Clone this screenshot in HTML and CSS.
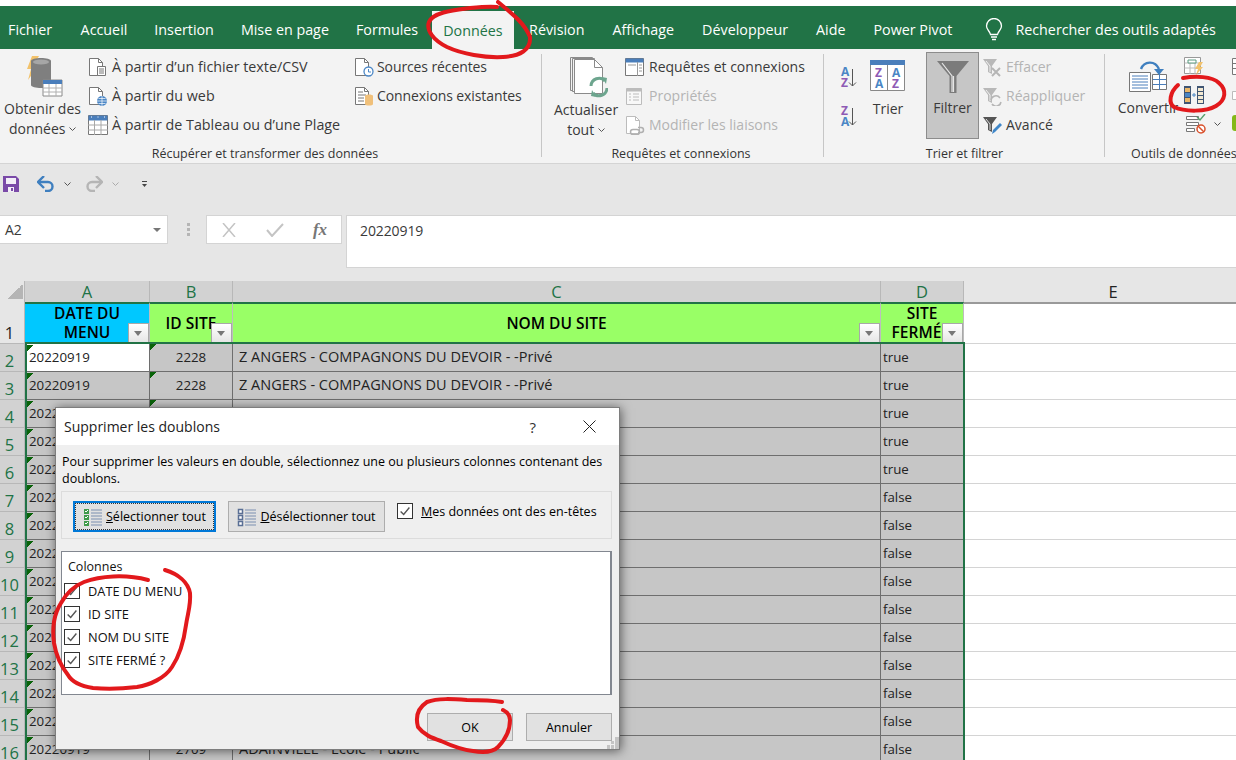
FILE: index.html
```html
<!DOCTYPE html>
<html lang="fr">
<head>
    <meta charset="UTF-8">
    <title>Supprimer les doublons</title>
    <link rel="stylesheet" href="styles.css">
</head>
<body>
<svg class="defs" width="0" height="0">
    <symbol id="chev" viewBox="0 0 7 4"><path d="M.5.5 3.5 3.5 6.5.5" fill="none" stroke="#555"/></symbol>
    <symbol id="tick" viewBox="0 0 16 16"><path d="M3 8.500 6.500 12 13 4" fill="none" stroke="#555" stroke-width="1.600"/></symbol>
    <symbol id="funnel" viewBox="0 0 20 20"><path d="M1 2h14L10 9v8l-4-2V9z" fill="currentColor"/><path d="M4 4l4 5v6" fill="none" stroke="#fff" stroke-width=".8"/></symbol>
</svg>

<div class="app">
    <div class="window-top"></div>

    <!-- onglets -->
    <nav class="tabs">
        <span class="tab tab-first">Fichier</span>
        <span class="tab">Accueil</span>
        <span class="tab">Insertion</span>
        <span class="tab">Mise en page</span>
        <span class="tab">Formules</span>
        <span class="tab tab-active">Données</span>
        <span class="tab">Révision</span>
        <span class="tab">Affichage</span>
        <span class="tab">Développeur</span>
        <span class="tab">Aide</span>
        <span class="tab">Power Pivot</span>
        <span class="tab tab-search">
            <svg class="bulb" width="20" height="24" viewBox="0 0 20 24"><path d="M6.500 16.500C6 13 2.500 12 2.500 8a7.500 7.500 0 0 1 15 0c0 4-3.500 5-4 8.500zM7 19h6M8 21.500h4" fill="none" stroke="#fff" stroke-width="1.300"/></svg>
            Rechercher des outils adaptés
        </span>
    </nav>

    <!-- ruban -->
    <section class="ribbon">
        <div class="group group-get">
            <div class="group-body">
                <div class="big big-get">
                    <svg width="48" height="42" viewBox="0 0 48 42">
                        <path d="M13 1h7l-5 9h5L9 25l3-11H8z" fill="#f2c26b"/>
                        <path d="M12 6c0-4 20-4 20 0v24c0 4-20 4-20 0z" fill="#7f7f7f"/>
                        <ellipse cx="22" cy="7" rx="8" ry="2.500" fill="#a6a6a6"/>
                        <path d="M24 25h19v16H24z" fill="#fff" stroke="#8a8a8a"/>
                        <path d="M24 25h19v4H24z" fill="#4a7ebb"/>
                        <path d="M30 29v12M37 29v12M24 33h19M24 37h19" stroke="#b0b0b0" fill="none"/>
                    </svg>
                    <span>Obtenir des</span>
                    <span>données <svg class="chev" width="7" height="4"><use href="#chev"/></svg></span>
                </div>
                <div class="col col-get">
                    <div class="item">
                        <svg class="ic" viewBox="0 0 20 20"><path d="M1.500 1.500h9l4 4v13h-13z" fill="#fff" stroke="#777"/><path d="M10.500 1.500v4h4" fill="none" stroke="#777"/><path d="M9.500 9.500h8v9h-8z" fill="#fff" stroke="#777"/><path d="M11 12h5M11 14h5M11 16h5" stroke="#777"/></svg>
                        À partir d’un fichier texte/CSV
                    </div>
                    <div class="item">
                        <svg class="ic" viewBox="0 0 20 20"><path d="M1.500 1.500h9l4 4v13h-13z" fill="#fff" stroke="#777"/><path d="M10.500 1.500v4h4" fill="none" stroke="#777"/><circle cx="14" cy="15" r="5" fill="#4a86c5"/><path d="M9 15h10M14 10v10M10.500 12.500h7M10.500 17.500h7" stroke="#fff" stroke-width=".7"/></svg>
                        À partir du web
                    </div>
                    <div class="item">
                        <svg class="ic" viewBox="0 0 20 20"><path d="M.5.5h19v19H.5z" fill="#fff" stroke="#777"/><path d="M.5.5h19v5H.5z" fill="#4a7ebb"/><path d="M6.500 5v15M13 5v15M0 10h20M0 15h20" stroke="#a8a8a8"/><path d="M3 2h1M9.500 2h1M16 2h1" stroke="#fff"/></svg>
                        À partir de Tableau ou d’une Plage
                    </div>
                </div>
                <div class="col col-recent">
                    <div class="item">
                        <svg class="ic" viewBox="0 0 20 20"><path d="M1.500 1.500h9l4 4v13h-13z" fill="#fff" stroke="#777"/><path d="M10.500 1.500v4h4" fill="none" stroke="#777"/><circle cx="14.500" cy="14.500" r="4.500" fill="#fff" stroke="#4a86c5" stroke-width="1.300"/><path d="M14.500 12v3h2.500" fill="none" stroke="#4a86c5"/></svg>
                        Sources récentes
                    </div>
                    <div class="item">
                        <svg class="ic" viewBox="0 0 20 20"><path d="M1.500 1.500h9l4 4v13h-13z" fill="#fff" stroke="#777"/><path d="M10.500 1.500v4h4M4 6h5M4 9h8M4 12h6M4 15h6" fill="none" stroke="#777"/><path d="M11 10c0-2 8-2 8 0v8c0 2-8 2-8 0z" fill="#f0c07a"/></svg>
                        Connexions existantes
                    </div>
                </div>
            </div>
            <div class="group-label">Récupérer et transformer des données</div>
        </div>

        <div class="group group-query">
            <div class="group-body">
                <div class="big big-refresh">
                    <svg width="44" height="42" viewBox="0 0 44 42">
                        <path d="M6.500 1.500h22v33h-22z" fill="#f3f3f3" stroke="#8a8a8a"/>
                        <path d="M8.500 2.500h22v33h-22z" fill="#f3f3f3" stroke="#8a8a8a"/>
                        <path d="M10.500 3.500h20l8 8v26h-28z" fill="#fff" stroke="#8a8a8a"/>
                        <path d="M30.500 3.500v8h8" fill="none" stroke="#8a8a8a"/>
                        <path d="M27 30a8 8 0 0 1 14-5M43 32a8 8 0 0 1-14 5" fill="none" stroke="#6da58e" stroke-width="3"/>
                        <path d="M38 21l5 1-1 6zM32 41l-5-1 1-6z" fill="#6da58e"/>
                    </svg>
                    <span>Actualiser</span>
                    <span>tout <svg class="chev" width="7" height="4"><use href="#chev"/></svg></span>
                </div>
                <div class="col col-query">
                    <div class="item">
                        <svg class="ic" viewBox="0 0 20 20"><path d="M.5 1.500h18v17H.5z" fill="#fff" stroke="#777"/><path d="M.5 1.500h18v4H.5z" fill="#4a7ebb"/><path d="M12.500 5v14M14 8h3M14 11h3M14 14h3M3 8h8" stroke="#999"/></svg>
                        Requêtes et connexions
                    </div>
                    <div class="item item-off">
                        <svg class="ic" viewBox="0 0 20 20"><path d="M1.500 2.500h15v16h-15z" fill="#f8f8f8" stroke="#bcbcbc"/><path d="M1.500 2.500h15v3h-15z" fill="#bcbcbc"/><path d="M4 8h2M4 11h2M4 14h2M8 8h6M8 11h6M8 14h6" stroke="#bcbcbc"/></svg>
                        Propriétés
                    </div>
                    <div class="item item-off">
                        <svg class="ic" viewBox="0 0 20 20"><path d="M1.500 1.500h9l4 4v13h-13z" fill="#fff" stroke="#bcbcbc"/><path d="M10.500 1.500v4h4" fill="none" stroke="#bcbcbc"/><path d="M8 14.500h4a2.500 2.500 0 0 1 0 5H8a2.500 2.500 0 0 1 0-5zM13 12.500h3a2.500 2.500 0 0 1 0 5h-3" fill="none" stroke="#b0b0b0" stroke-width="1.500"/></svg>
                        Modifier les liaisons
                    </div>
                </div>
            </div>
            <div class="group-label">Requêtes et connexions</div>
        </div>

        <div class="group group-sort">
            <div class="group-body">
                <div class="sort-arrows">
                    <svg width="16" height="24" viewBox="0 0 16 24"><text class="sort-a" x="0" y="11">A</text><text class="sort-z" x="0" y="22">Z</text><path d="M11.500 4v17M8 17.500l3.500 3.500 3.500-3.500" fill="none" stroke="#555"/></svg>
                    <svg width="16" height="24" viewBox="0 0 16 24"><text class="sort-z" x="0" y="11">Z</text><text class="sort-a" x="0" y="22">A</text><path d="M11.500 4v17M8 17.500l3.500 3.500 3.500-3.500" fill="none" stroke="#555"/></svg>
                </div>
                <div class="big big-trier">
                    <svg width="36" height="33" viewBox="0 0 36 33">
                        <path d="M.5.5h34v30H.5z" fill="#fff" stroke="#888"/>
                        <path d="M0 0h35v5H0z" fill="#4a7ebb"/>
                        <path d="M17.500 5v26" stroke="#888"/>
                        <text class="sort-z big-l" x="5" y="17">Z</text>
                        <text class="sort-a big-l" x="5" y="28">A</text>
                        <text class="sort-a big-l" x="22" y="17">A</text>
                        <text class="sort-z big-l" x="22" y="28">Z</text>
                    </svg>
                    <span>Trier</span>
                </div>
                <div class="big big-filter">
                    <svg width="34" height="34" viewBox="0 0 34 34">
                        <path d="M1 1h32L20.500 16v17h-7V16z" fill="#7b7b7b"/>
                        <path d="M6 3l10 13v16M17.500 16v16" fill="none" stroke="#e6e6e6" stroke-width="1.200"/>
                    </svg>
                    <span>Filtrer</span>
                </div>
                <div class="col col-filter">
                    <div class="item item-off">
                        <svg class="ic ic-off" viewBox="0 0 20 20"><use href="#funnel"/><path d="M10 11l8 8M18 11l-8 8" stroke="#b5b5b5" stroke-width="2"/></svg>
                        Effacer
                    </div>
                    <div class="item item-off">
                        <svg class="ic ic-off" viewBox="0 0 20 20"><use href="#funnel"/><path d="M9 14a5 5 0 0 1 9-2M19 16a5 5 0 0 1-9 2" fill="none" stroke="#b5b5b5" stroke-width="1.500"/></svg>
                        Réappliquer
                    </div>
                    <div class="item">
                        <svg class="ic ic-dark" viewBox="0 0 20 20"><use href="#funnel"/><path d="M10 19l1-4 7-7 2 2-7 7z" fill="#3f86c8"/></svg>
                        Avancé
                    </div>
                </div>
            </div>
            <div class="group-label">Trier et filtrer</div>
        </div>

        <div class="group group-tools">
            <div class="group-body">
                <div class="big big-convert">
                    <svg width="38" height="32" viewBox="0 0 38 32">
                        <path d="M.5 12.500h21v19H.5z" fill="#fff" stroke="#777"/>
                        <path d="M3 16h16M3 19h16M3 22h16M3 25h16M3 28h16" stroke="#4a7ebb"/>
                        <path d="M23.500 14.500h14v15h-14z" fill="#fff" stroke="#777"/>
                        <path d="M30.500 14v16M24 19.500h13M24 24.500h13" stroke="#4a7ebb"/>
                        <path d="M12 9C15 1 26 0 30 9" fill="none" stroke="#3f7fbf" stroke-width="2.400"/>
                        <path d="M25 9h10l-5 6z" fill="#3f7fbf"/>
                    </svg>
                    <span>Convertir</span>
                </div>
                <div class="tools-col">
                    <svg class="ic" viewBox="0 0 20 20"><path d="M.5.5h16v16H.5z" fill="#fff" stroke="#999"/><path d="M.5 6h16M.5 11h16M6 6v11M11 6v11" stroke="#bbb"/><path d="M4 3h8v3H4z" fill="#fff" stroke="#5a9a80"/><path d="M15 5h4l-3 5h3l-7 8 2-6h-3z" fill="#f2c26b"/></svg>
                    <svg class="ic ic-dup" viewBox="0 0 20 18"><path d="M0 0h7v18H0zM13 0h7v18h-7z" fill="#3f5573"/><path d="M1 2h5v4H1zM1 12h5v4H1z" fill="#eab768"/><path d="M1 7h5v4H1z" fill="#4a86c5"/><path d="M14 2h5v3h-5zM14 6h5v3h-5zM14 10h5v3h-5zM14 14h5v3h-5z" fill="#f3e9d2"/><path d="M8 9h4M10 7v4" stroke="#4a86c5"/></svg>
                    <div class="valid">
                        <svg class="ic" viewBox="0 0 20 20"><path d="M.5 2.500h12v3H.5zM.5 8.500h12v3H.5zM.5 14.500h8v3H.5z" fill="#fff" stroke="#777"/><path d="M11 3l3 3 5-6" fill="none" stroke="#5aa06e" stroke-width="1.400"/><circle cx="15" cy="15" r="4" fill="#fff" stroke="#d9512c" stroke-width="1.500"/><path d="M12 12l6 6" stroke="#d9512c" stroke-width="1.500"/></svg>
                        <svg class="chev" width="7" height="4"><use href="#chev"/></svg>
                    </div>
                </div>
                <div class="tools-edge">
                    <svg class="ic" viewBox="0 0 20 20"><path d="M.5 1.500h18v16H.5z" fill="#fff" stroke="#777"/><path d="M0 6.500h19M0 11.500h19" stroke="#777"/></svg>
                    <svg class="ic" viewBox="0 0 20 20"><path d="M.5 5.500h18v8H.5z" fill="#fff" stroke="#bbb"/></svg>
                    <svg class="ic" viewBox="0 0 20 20"><rect width="20" height="16" rx="3" fill="#84b818"/></svg>
                </div>
            </div>
            <div class="group-label">Outils de données</div>
        </div>
    </section>

    <!-- accès rapide -->
    <div class="qat">
        <svg width="16" height="16" viewBox="0 0 16 16"><path d="M0 0h13l3 3v13H0z" fill="#7a4aa8"/><path d="M3 2h10v6H3z" fill="#f3eef8"/><path d="M5 11h6v5H5z" fill="#f3eef8"/><path d="M8 12h2v3H8z" fill="#7a4aa8"/></svg>
        <svg class="qat-undo" width="18" height="16" viewBox="0 0 18 16"><path d="M2 6h9a4.500 4.500 0 0 1 0 9H8" fill="none" stroke="#3f7fbf" stroke-width="2.400"/><path d="M7 0 1 6l6 6" fill="none" stroke="#3f7fbf" stroke-width="2.400"/></svg>
        <svg class="chev" width="7" height="4"><use href="#chev"/></svg>
        <svg class="qat-redo" width="18" height="16" viewBox="0 0 18 16"><path d="M16 6H7a4.500 4.500 0 0 0 0 9h3" fill="none" stroke="#b5b5b5" stroke-width="2.400"/><path d="M11 0l6 6-6 6" fill="none" stroke="#b5b5b5" stroke-width="2.400"/></svg>
        <svg class="chev chev-off" width="7" height="4"><use href="#chev"/></svg>
        <svg class="qat-more" width="7" height="7" viewBox="0 0 7 7"><path d="M1 .5h5" stroke="#444"/><path d="M1 3h5L3.500 6z" fill="#444"/></svg>
    </div>

    <!-- barre de formule -->
    <div class="formula-bar">
        <div class="name-box">A2<svg width="8" height="4" viewBox="0 0 8 4"><path d="M0 0h8L4 4z" fill="#777"/></svg></div>
        <div class="fb-grip"><i></i><i></i><i></i></div>
        <div class="fb-buttons">
            <svg width="16" height="14" viewBox="0 0 16 14"><path d="M2 0l12 14M14 0 2 14" stroke="#c4c4c4" stroke-width="1.500"/></svg>
            <svg width="18" height="14" viewBox="0 0 18 14"><path d="M1 7l5 6L17 1" fill="none" stroke="#c4c4c4" stroke-width="2"/></svg>
            <span class="fx">fx</span>
        </div>
        <div class="fb-input">20220919</div>
    </div>

    <!-- feuille -->
    <div class="sheet-wrap">
        <table class="sheet">
            <colgroup>
                <col class="c-head"><col class="c-a"><col class="c-b"><col class="c-c"><col class="c-d"><col>
            </colgroup>
            <tr class="col-heads">
                <th class="corner"><span></span></th>
                <th>A</th><th>B</th><th>C</th><th>D</th><th class="plain">E</th>
            </tr>
            <tr class="head-row">
                <th class="row-plain">1</th>
                <td class="h-blue"><span class="h-text">DATE DU<br>MENU</span><span class="filter-btn"></span></td>
                <td class="h-green"><span class="h-text">ID SITE</span><span class="filter-btn"></span></td>
                <td class="h-green"><span class="h-text">NOM DU SITE</span><span class="filter-btn"></span></td>
                <td class="h-green"><span class="h-text">SITE<br>FERMÉ ?</span><span class="filter-btn"></span></td>
                <td class="blank"></td>
            </tr>
            <tr><th>2</th><td class="d d-active">20220919</td><td class="i">2228</td><td class="n">Z ANGERS - COMPAGNONS DU DEVOIR - -Privé</td><td class="f">true</td><td class="blank"></td></tr>
            <tr><th>3</th><td class="d">20220919</td><td class="i">2228</td><td class="n">Z ANGERS - COMPAGNONS DU DEVOIR - -Privé</td><td class="f">true</td><td class="blank"></td></tr>
            <tr><th>4</th><td class="d">20220919</td><td class="i">2228</td><td class="n">Z ANGERS - COMPAGNONS DU DEVOIR - -Privé</td><td class="f">true</td><td class="blank"></td></tr>
            <tr><th>5</th><td class="d">20220919</td><td class="i"></td><td class="n"></td><td class="f">true</td><td class="blank"></td></tr>
            <tr><th>6</th><td class="d">20220919</td><td class="i"></td><td class="n"></td><td class="f">true</td><td class="blank"></td></tr>
            <tr><th>7</th><td class="d">20220919</td><td class="i"></td><td class="n"></td><td class="f">false</td><td class="blank"></td></tr>
            <tr><th>8</th><td class="d">20220919</td><td class="i"></td><td class="n"></td><td class="f">false</td><td class="blank"></td></tr>
            <tr><th>9</th><td class="d">20220919</td><td class="i"></td><td class="n"></td><td class="f">false</td><td class="blank"></td></tr>
            <tr><th>10</th><td class="d">20220919</td><td class="i"></td><td class="n"></td><td class="f">false</td><td class="blank"></td></tr>
            <tr><th>11</th><td class="d">20220919</td><td class="i"></td><td class="n"></td><td class="f">false</td><td class="blank"></td></tr>
            <tr><th>12</th><td class="d">20220919</td><td class="i"></td><td class="n"></td><td class="f">false</td><td class="blank"></td></tr>
            <tr><th>13</th><td class="d">20220919</td><td class="i"></td><td class="n"></td><td class="f">false</td><td class="blank"></td></tr>
            <tr><th>14</th><td class="d">20220919</td><td class="i"></td><td class="n"></td><td class="f">false</td><td class="blank"></td></tr>
            <tr><th>15</th><td class="d">20220919</td><td class="i"></td><td class="n"></td><td class="f">false</td><td class="blank"></td></tr>
            <tr><th>16</th><td class="d">20220919</td><td class="i">2709</td><td class="n">ADAINVILLE - Ecole - Public</td><td class="f">false</td><td class="blank"></td></tr>
        </table>
        <div class="selection"></div>
    </div>

    <!-- boite de dialogue -->
    <div class="dialog">
        <div class="dlg-title">
            <span class="dlg-name">Supprimer les doublons</span>
            <span class="dlg-help">?</span>
            <svg class="dlg-close" width="13" height="13" viewBox="0 0 13 13"><path d="M.5.5l12 12M12.500.5l-12 12" stroke="#222"/></svg>
        </div>
        <div class="dlg-body">
            <p class="dlg-text">Pour supprimer les valeurs en double, sélectionnez une ou plusieurs colonnes contenant des doublons.</p>
            <div class="dlg-panel">
                <div class="btn btn-focus">
                    <svg width="20" height="20" viewBox="0 0 20 20"><path d="M8 3h11M8 6h11M8 9h11M8 12h11M8 15h11M8 18h11" stroke="#7a8fb0"/><path d="M1 2h5v5H1zM1 8h5v5H1zM1 14h5v5H1z" fill="#3f9a4a"/><path d="M2 4l1 1 2-2M2 10l1 1 2-2M2 16l1 1 2-2" fill="none" stroke="#fff"/></svg>
                    <span><u>S</u>électionner tout</span>
                </div>
                <div class="btn btn-second">
                    <svg width="20" height="20" viewBox="0 0 20 20"><path d="M8 3h11M8 6h11M8 9h11M8 12h11M8 15h11M8 18h11" stroke="#7a8fb0"/><path d="M1.500 2.500h4v4h-4zM1.500 8.500h4v4h-4zM1.500 14.500h4v4h-4z" fill="#fff" stroke="#5a6f95" stroke-width="1.500"/></svg>
                    <span><u>D</u>ésélectionner tout</span>
                </div>
                <label class="chk-line">
                    <span class="chk"><svg width="14" height="14"><use href="#tick"/></svg></span>
                    <span><u>M</u>es données ont des en-têtes</span>
                </label>
            </div>
            <div class="dlg-list">
                <div class="list-head">Colonnes</div>
                <div class="list-item"><span class="chk"><svg width="14" height="14"><use href="#tick"/></svg></span>DATE DU MENU</div>
                <div class="list-item"><span class="chk"><svg width="14" height="14"><use href="#tick"/></svg></span>ID SITE</div>
                <div class="list-item"><span class="chk"><svg width="14" height="14"><use href="#tick"/></svg></span>NOM DU SITE</div>
                <div class="list-item"><span class="chk"><svg width="14" height="14"><use href="#tick"/></svg></span>SITE FERMÉ ?</div>
            </div>
            <div class="dlg-actions">
                <div class="btn btn-act">OK</div>
                <div class="btn btn-act">Annuler</div>
            </div>
        </div>
        <svg class="grip" width="12" height="12" viewBox="0 0 12 12"><path d="M8 0h4v4H8zM4 4h3v3H4zM8 4h4v4H8zM0 8h3v4H0zM4 8h3v4H4zM8 8h4v4H8z" fill="#c4c4c4"/></svg>
    </div>

    <!-- annotations au feutre rouge -->
    <svg class="marks" width="1236" height="760" viewBox="0 0 1236 760">
        <path d="M498 2C510 12 524 22 530 37C531 50 520 56 503 57C485 58 462 54 447 47C433 40 426 30 429 22C433 12 455 10 470 8C480 7 490 6 497 7"/>
        <path d="M1183 78C1195 76 1212 76 1219 83C1227 90 1226 100 1216 106C1206 112 1185 112 1174 107C1168 103 1170 92 1178 85"/>
        <path d="M165 570C178 574 188 582 190 593C191 605 188 612 186 625C184 640 180 655 172 667C165 678 150 685 137 687C120 689 105 689 93 688C80 686 72 682 68 675C60 665 56 655 54 643C52 628 54 614 61 603C66 594 74 586 84 582C100 576 125 574 148 580"/>
        <path d="M502 702C490 700 478 700 467 700C453 699 438 698 427 702C418 708 415 716 418 727C424 735 432 738 441 741C452 746 463 750 473 751C485 753 493 752 498 747C505 740 510 730 510 720C510 715 507 712 503 710"/>
    </svg>
</div>
</body>
</html>
```

FILE: styles.css
```css
* {
    margin: 0;
    padding: 0;
    box-sizing: border-box;
}

html, body {
    height: 100%;
    overflow: hidden;
}

body {
    font-family: "Open Sans", "Noto Sans", sans-serif;
    background-color: #e6e6e6;
    color: #3a3a3a;
}

.defs {
    display: block;
    height: 0;
}

.app {
    position: relative;
    width: 1236px;
    height: 760px;
    overflow: hidden;
}

.window-top {
    height: 6px;
    background-color: #fff;
}

/* Tabs */
.tabs {
    display: flex;
    height: 43px;
    background-color: #217346;
    color: #fff;
    font-size: 14.3px;
    white-space: nowrap;
}

.tab {
    display: flex;
    align-items: center;
    padding: 4px 13.5px 0;
}

.tab-first {
    padding-left: 8px;
    padding-right: 15px;
}

.tab-active {
    margin: 5px 1px 0 0;
    padding: 0 11.5px;
    background-color: #f3f3f3;
    color: #217346;
}

.tab-active ~ .tab {
    padding: 4px 14px 0;
}

.tabs .tab-search {
    gap: 11px;
    padding-left: 18px;
}

/* Ribbon */
.ribbon {
    display: flex;
    height: 115px;
    background-color: #f3f3f3;
    border-bottom: 1px solid #d4d4d4;
    font-size: 14px;
    white-space: nowrap;
    overflow: hidden;
}

.group {
    display: flex;
    flex-direction: column;
    flex: none;
    background: linear-gradient(#c6c6c6, #c6c6c6) right 5px / 1px 103px no-repeat;
}

.group-get { width: 542px; }
.group-query { width: 282px; }
.group-sort { width: 281px; }
.group-tools { width: 131px; background: none; }

.group-body {
    display: flex;
    height: 94px;
}

.group-label {
    height: 20px;
    line-height: 22px;
    text-align: center;
    font-size: 12.5px;
    color: #333;
}

.group-get .group-label { padding-right: 12px; }
.group-query .group-label { padding-right: 4px; }
.group-tools .group-label { text-align: left; padding-left: 26px; }

.big {
    display: flex;
    flex-direction: column;
    align-items: center;
    flex: none;
    line-height: 20px;
}

.big svg:first-child {
    flex: none;
    margin-bottom: 2px;
}

.big-get {
    width: 85px;
    padding-top: 6px;
}

.big-refresh {
    width: 66px;
    margin-left: 11px;
    padding-top: 7px;
}

.big-trier {
    width: 36px;
    margin-left: 13px;
    padding-top: 11px;
}

.big-trier svg:first-child {
    margin-bottom: 6px;
}

.big-filter {
    width: 53px;
    height: 87px;
    margin-top: 3px;
    margin-left: 20px;
    padding-top: 7px;
    background-color: #c6c6c6;
    border: 1px solid #8c8c8c;
}

.big-filter svg:first-child {
    margin-bottom: 4px;
}

.big-convert {
    width: 62px;
    margin-left: 12px;
    padding-top: 11px;
}

.big-convert svg:first-child {
    margin-bottom: 6px;
}

.col {
    display: flex;
    flex-direction: column;
    padding-top: 3px;
}

.col-get { margin-left: 3px; width: 266px; font-size: 14.3px; }
.col-recent { letter-spacing: -0.1px; }
.col-query { margin-left: 6px; }
.col-filter { margin-left: 3px; }

.item {
    display: flex;
    align-items: center;
    gap: 4px;
    height: 29px;
}

.col-recent .item { gap: 3px; }

.item-off {
    color: #b4b4b4;
}

.ic {
    display: block;
    flex: none;
    width: 20px;
    height: 20px;
}

.ic-off { color: #b8b8b8; }
.ic-dark { color: #555; }

.chev {
    display: inline-block;
    vertical-align: middle;
}

.chev-off { opacity: 0.4; }

.sort-arrows {
    display: flex;
    flex-direction: column;
    gap: 15px;
    margin-left: 17px;
    padding-top: 16px;
}

.sort-arrows svg {
    overflow: visible;
}

.sort-arrows text {
    font-size: 12px;
    font-weight: 700;
}

.sort-a { fill: #4a86c5; }
.sort-z { fill: #8e5bb5; }

.big-trier text {
    font-size: 12px;
    font-weight: 700;
}

.tools-col {
    display: flex;
    flex: none;
    flex-direction: column;
    gap: 9px;
    width: 48px;
    margin-left: 5px;
    padding-top: 8px;
}

.ic-dup {
    height: 18px;
}

.valid {
    display: flex;
    align-items: center;
    gap: 8px;
    margin: 1px 0 0 2px;
}

.tools-edge {
    display: flex;
    flex: none;
    flex-direction: column;
    gap: 9px;
    width: 20px;
    padding-top: 8px;
}

/* Quick access toolbar */
.qat {
    display: flex;
    align-items: center;
    height: 40px;
    padding-left: 3px;
}

.qat-undo { margin-left: 18px; }
.qat .chev { margin-left: 9px; }
.qat-redo { margin-left: 14px; }
.qat-more { margin-left: 22px; }

/* Formula bar */
.formula-bar {
    display: flex;
    align-items: flex-start;
    height: 53px;
    margin-top: 11px;
    font-size: 14px;
    letter-spacing: -0.1px;
}

.name-box {
    display: flex;
    align-items: center;
    justify-content: space-between;
    width: 168px;
    height: 29px;
    padding: 0 6px 0 5px;
    background-color: #fff;
    border: 1px solid #d4d4d4;
    border-left: 0;
}

.fb-grip {
    display: flex;
    flex-direction: column;
    gap: 2px;
    width: 38px;
    padding: 8px 0 0 19px;
}

.fb-grip i {
    width: 3px;
    height: 3px;
    background-color: #b5b5b5;
}

.fb-buttons {
    display: flex;
    align-items: center;
    justify-content: space-between;
    width: 136px;
    height: 29px;
    padding: 0 14px;
    background-color: #fff;
    border: 1px solid #d4d4d4;
}

.fx {
    font-family: "Liberation Serif", serif;
    font-size: 17px;
    font-style: italic;
    font-weight: 700;
    color: #777;
}

.fb-input {
    flex: 1;
    height: 53px;
    margin-left: 4px;
    padding: 5px 0 0 13px;
    background-color: #fff;
    border: 1px solid #d4d4d4;
    border-right: 0;
}

/* Sheet */
.sheet-wrap {
    position: relative;
    width: 1262px;
    margin-top: 13px;
}

.sheet {
    width: 1262px;
    table-layout: fixed;
    border-collapse: separate;
    border-spacing: 0;
    font-size: 13.3px;
    color: #222;
}

.c-head { width: 25px; }
.c-a { width: 125px; }
.c-b { width: 83px; }
.c-c { width: 648px; }
.c-d { width: 83px; }

.sheet tr {
    height: 28px;
}

.sheet th {
    padding-right: 5px;
    font-size: 16.5px;
    font-weight: 400;
    line-height: 20px;
    vertical-align: bottom;
    background-color: #d2d2d2;
    color: #217346;
    border-right: 1px solid #b8b8b8;
    border-bottom: 1px solid #b8b8b8;
}

.sheet .col-heads {
    height: 21px;
}

.sheet .col-heads th {
    height: 21px;
    padding-right: 0;
    line-height: 21px;
    border-bottom: 0;
}

.sheet th.corner {
    background-color: #e6e6e6;
    border-right: 1px solid #b8b8b8;
}

.corner span {
    display: block;
    width: 15px;
    height: 15px;
    margin: 0 0 3px 8px;
    background: linear-gradient(135deg, transparent 50%, #b5b5b5 50%);
}

.sheet th.plain {
    background-color: #e6e6e6;
    color: #222;
    border-right: 0;
}

.sheet .head-row {
    height: 41px;
}

.sheet th.row-plain {
    background-color: #e6e6e6;
    color: #222;
}

.head-row td {
    position: relative;
    height: 41px;
    padding: 0 0 2px;
    text-align: center;
    border-top: 2px solid #217346;
    font-size: 15.5px;
    font-weight: 600;
    line-height: 19px;
    color: #000;
    border-right: 1px solid #bdbdbd;
}

.head-row td.blank {
    border-top: 2px solid #9a9a9a;
    border-right: 0;
}

.h-blue { background-color: #00c8ff; }
.h-green { background-color: #99ff66; }

.filter-btn {
    position: absolute;
    right: 0;
    bottom: 0;
    width: 21px;
    height: 21px;
    background: linear-gradient(#fff, #e4e4e4);
    border: 1px solid #a8a8a8;
}

.filter-btn::after {
    content: "";
    position: absolute;
    left: 5px;
    top: 7px;
    border: 4px solid transparent;
    border-top: 5px solid #777;
    border-bottom: 0;
}

.sheet td {
    white-space: nowrap;
    overflow: hidden;
}

.d, .i, .n, .f {
    background-color: #c6c6c6;
    border-right: 1px solid #6e6e6e;
    border-bottom: 1px solid #6e6e6e;
    padding-bottom: 2px;
}

.d, .i {
    background-image: linear-gradient(135deg, #0a640a 4.5px, transparent 4.5px);
    background-repeat: no-repeat;
}

.d {
    padding-left: 4px;
    background-position: 2px 1px;
}

.i { text-align: center; }

.n {
    padding-left: 6px;
    font-size: 14.5px;
}

.f { padding-left: 2px; }

.d-active {
    background-color: #fff;
}

.blank {
    background-color: #fff;
    border-bottom: 1px solid #d4d4d4;
}

.selection {
    position: absolute;
    left: 25px;
    top: 61px;
    width: 940px;
    height: 500px;
    border: 2px solid #217346;
    pointer-events: none;
}

/* Dialog */
.dialog {
    position: absolute;
    left: 55px;
    top: 407px;
    display: flex;
    flex-direction: column;
    width: 565px;
    height: 343px;
    background-color: #efefef;
    border: 1px solid #7e7e7e;
    box-shadow: 1px 1px 10px rgba(0, 0, 0, 0.55);
    color: #000;
    font-size: 12.5px;
}

.dlg-title {
    display: flex;
    align-items: center;
    flex: none;
    height: 37px;
    padding: 0 23px 0 8px;
    background-color: #fff;
}

.dlg-name {
    flex: 1;
    font-size: 14px;
    color: #222;
}

.dlg-help {
    margin-right: 47px;
    font-size: 15px;
    color: #333;
}

.dlg-body {
    display: flex;
    flex-direction: column;
    flex: 1;
    padding: 0 7px 0 5px;
}

.dlg-text {
    height: 46px;
    padding: 8px 0 0 1px;
    line-height: 17px;
}

.dlg-panel {
    display: flex;
    align-items: flex-start;
    height: 48px;
    padding: 9px 11px;
    border: 1px solid #dcdcdc;
}

.btn {
    display: flex;
    align-items: center;
    justify-content: center;
    background-color: #e1e1e1;
    border: 1px solid #adadad;
}

.btn-focus {
    gap: 3px;
    width: 143px;
    height: 31px;
    border: 2px solid #0078d7;
    outline: 1px dotted #333;
    outline-offset: -3px;
}

.btn-second {
    gap: 3px;
    width: 157px;
    height: 31px;
    margin-left: 12px;
}

.chk-line {
    display: flex;
    align-items: center;
    gap: 8px;
    height: 20px;
    margin-left: 12px;
}

.chk {
    display: flex;
    align-items: center;
    justify-content: center;
    flex: none;
    width: 16px;
    height: 16px;
    background-color: #fff;
    border: 1px solid #333;
}

.dlg-list {
    flex: none;
    height: 144px;
    margin-top: 12px;
    padding: 6px 0 0 2px;
    background-color: #fff;
    border: 1px solid #828790;
    border-right-width: 2px;
    font-size: 12.8px;
}

.list-head {
    height: 21px;
    padding-left: 4px;
    line-height: 18px;
    font-size: 12.5px;
    color: #111;
}

.list-item {
    display: flex;
    align-items: center;
    gap: 8px;
    height: 23px;
    color: #111;
}

.dlg-actions {
    display: flex;
    justify-content: flex-end;
    gap: 13px;
    padding-top: 18px;
}

.btn-act {
    width: 86px;
    height: 28px;
}

.grip {
    position: absolute;
    right: 0;
    bottom: 0;
}

.marks {
    position: absolute;
    left: 0;
    top: 0;
    pointer-events: none;
}

.marks path {
    fill: none;
    stroke: #e2191c;
    stroke-width: 4px;
    stroke-linecap: round;
    stroke-linejoin: round;
}
```
